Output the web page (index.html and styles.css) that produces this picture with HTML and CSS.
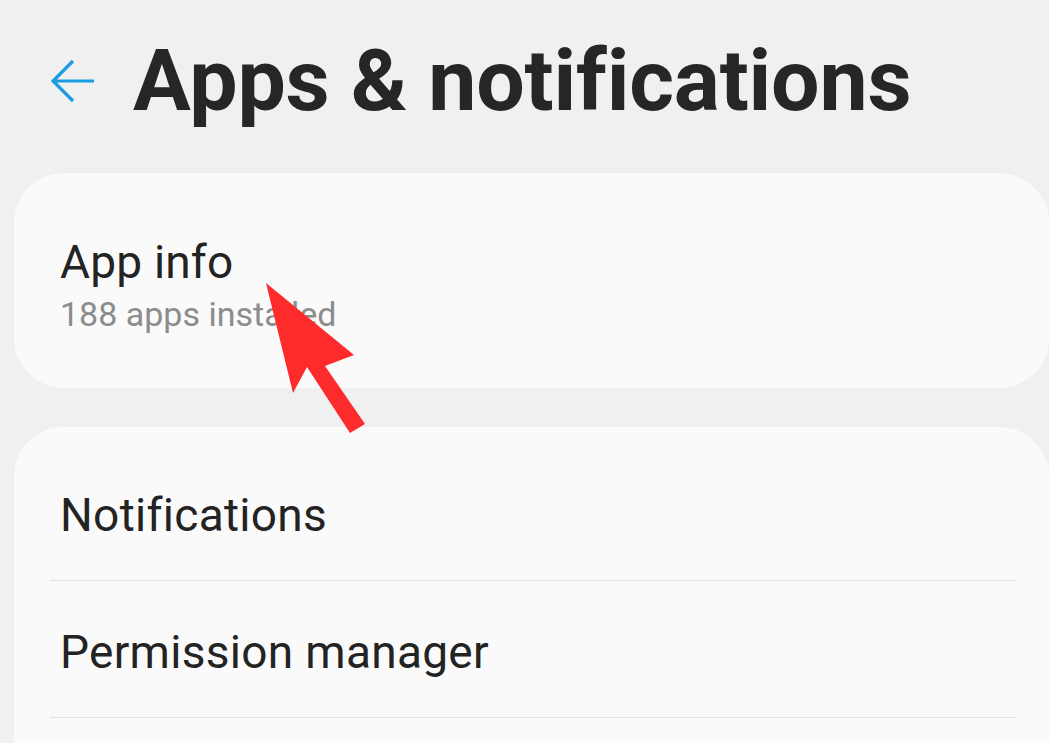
FILE: index.html
```html
<!DOCTYPE html>
<html lang="en">
<head>
<meta charset="utf-8">
<title>Apps &amp; notifications</title>
<link rel="stylesheet" href="styles.css">
</head>
<body>
<div class="screen">
  <header class="header">
    <svg class="back" width="44" height="44" viewBox="0 0 44 44" aria-hidden="true">
      <path d="M2 22 H43 M22 2 L2 22 L22 42" fill="none" stroke="#1b9ce2" stroke-width="3.2" stroke-linecap="butt" stroke-linejoin="miter"/>
    </svg>
    <h1 class="title">Apps &amp; notifications</h1>
  </header>

  <section class="card card-single">
    <div class="item">
      <div class="item-title">App info</div>
      <div class="item-sub">188 apps installed</div>
    </div>
  </section>

  <section class="card card-list">
    <div class="row">Notifications</div>
    <div class="divider"></div>
    <div class="row">Permission manager</div>
    <div class="divider"></div>
  </section>

  <svg class="pointer" width="110" height="160" viewBox="0 0 110 160" aria-hidden="true">
    <polygon points="0,0 88,72 59,83 99,141 84,150 41,84 27,110" fill="#fe2b2d"/>
  </svg>
</div>
</body>
</html>
```
FILE: styles.css
```css
* { box-sizing: border-box; }
html, body { margin: 0; padding: 0; }
body {
  background: #f0f0f0;
  font-family: Roboto, "Noto Sans", "Liberation Sans", sans-serif;
  color: #252525;
  width: 1049px;
  height: 743px;
  overflow: hidden;
}
.screen { position: relative; height: 743px; overflow: hidden; }

.header {
  display: flex;
  align-items: center;
  height: 173px;
  padding-left: 51px;
  padding-bottom: 12px;
}
.back { flex: none; display: block; }
.title {
  margin: 0 0 0 38px;
  font-size: 86px;
  font-weight: 700;
  letter-spacing: -0.2px;
  line-height: 1;
  color: #262626;
}

.card {
  background: #fafafa;
  margin-left: 14px;
}
.card-single {
  height: 215px;
  border-radius: 50px;
  display: flex;
  align-items: center;
  padding-left: 46px;
  padding-top: 6px;
}
.item { display: flex; flex-direction: column; }
.item-title {
  font-size: 46px;
  line-height: 56px;
  letter-spacing: 0.2px;
  color: #232323;
}
.item-sub {
  font-size: 34px;
  line-height: 40px;
  margin-top: 4px;
  color: #8c8c8c;
}

.card-list {
  margin-top: 39px;
  border-radius: 50px 50px 0 0;
  padding-top: 17px;
  height: 316px;
}
.row {
  height: 136px;
  display: flex;
  align-items: center;
  padding-left: 46px;
  padding-top: 6px;
  font-size: 46px;
  letter-spacing: 0.3px;
  color: #232323;
}
.divider {
  height: 1px;
  background: #e2e2e2;
  margin-left: 36px;
  margin-right: 33px;
}

.pointer {
  position: absolute;
  left: 266px;
  top: 283px;
}
```
